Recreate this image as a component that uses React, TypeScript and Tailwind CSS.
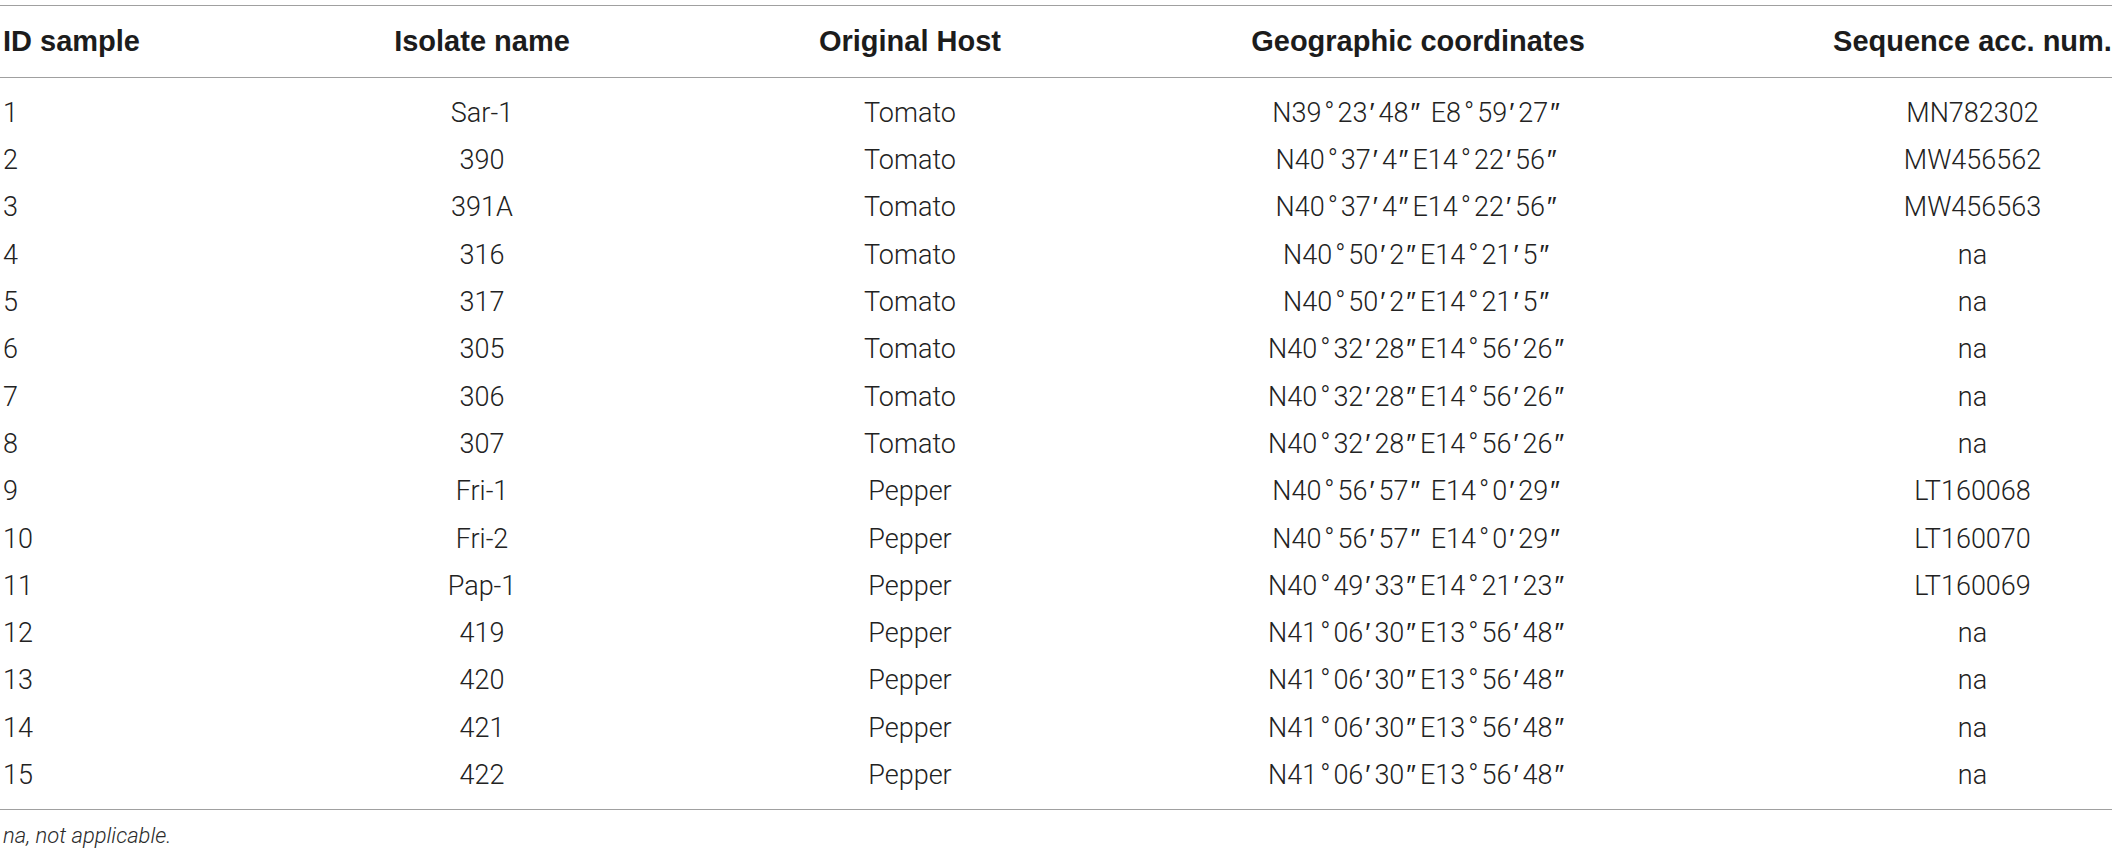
import React from "react";

const rows: [string, string, string, string, string][] = [
  ["1", "Sar-1", "Tomato", "N39°23′48″ E8°59′27″", "MN782302"],
  ["2", "390", "Tomato", "N40°37′4″E14°22′56″", "MW456562"],
  ["3", "391A", "Tomato", "N40°37′4″E14°22′56″", "MW456563"],
  ["4", "316", "Tomato", "N40°50′2″E14°21′5″", "na"],
  ["5", "317", "Tomato", "N40°50′2″E14°21′5″", "na"],
  ["6", "305", "Tomato", "N40°32′28″E14°56′26″", "na"],
  ["7", "306", "Tomato", "N40°32′28″E14°56′26″", "na"],
  ["8", "307", "Tomato", "N40°32′28″E14°56′26″", "na"],
  ["9", "Fri-1", "Pepper", "N40°56′57″ E14°0′29″", "LT160068"],
  ["10", "Fri-2", "Pepper", "N40°56′57″ E14°0′29″", "LT160070"],
  ["11", "Pap-1", "Pepper", "N40°49′33″E14°21′23″", "LT160069"],
  ["12", "419", "Pepper", "N41°06′30″E13°56′48″", "na"],
  ["13", "420", "Pepper", "N41°06′30″E13°56′48″", "na"],
  ["14", "421", "Pepper", "N41°06′30″E13°56′48″", "na"],
  ["15", "422", "Pepper", "N41°06′30″E13°56′48″", "na"],
];

function Coord({ text }: { text: string }) {
  const parts = text.split(/([°′″])/);
  return (
    <>
      {parts.map((p, i) => {
        if (p === "°")
          return (
            <span key={i} className="mx-[3px]">
              °
            </span>
          );
        if (p === "′" || p === "″")
          return (
            <span
              key={i}
              className="ml-[2px] mr-[4px]"
              style={{ fontFamily: '"Liberation Sans", sans-serif' }}
            >
              {p}
            </span>
          );
        return <React.Fragment key={i}>{p}</React.Fragment>;
      })}
    </>
  );
}

export default function App() {
  return (
    <div
      className="w-[2118px] h-[859px] bg-white pt-[5px] pr-[6px] text-[#222]"
      style={{ fontFamily: '"Liberation Sans", Arial, sans-serif' }}
    >
      <table className="w-[2112px] table-fixed border-collapse">
        <colgroup>
          <col className="w-[147px]" />
          <col className="w-[670px]" />
          <col className="w-[186px]" />
          <col className="w-[830px]" />
          <col className="w-[279px]" />
        </colgroup>
        <thead>
          <tr className="h-[72px] border-t border-b border-[#a0a0a0] text-[29px] font-bold text-[#1c1c1c]">
            <th className="text-left pl-[3px] font-bold whitespace-nowrap">ID sample</th>
            <th className="text-center font-bold whitespace-nowrap">Isolate name</th>
            <th className="text-center font-bold whitespace-nowrap">Original Host</th>
            <th className="text-center font-bold whitespace-nowrap">Geographic coordinates</th>
            <th className="text-center font-bold whitespace-nowrap">Sequence acc. num.</th>
          </tr>
        </thead>
        <tbody
          className="text-[27px] font-light text-[#222]"
          style={{ fontFamily: 'Roboto, "Liberation Sans", sans-serif' }}
        >
          <tr className="h-[12px]">
            <td colSpan={5}></td>
          </tr>
          {rows.map((r) => (
            <tr key={r[0]} className="h-[47.3px]">
              <td className="text-left pl-[3px]">{r[0]}</td>
              <td className="text-center">{r[1]}</td>
              <td className="text-center">{r[2]}</td>
              <td className="text-center whitespace-nowrap">
                <Coord text={r[3]} />
              </td>
              <td className="text-center">{r[4]}</td>
            </tr>
          ))}
          <tr className="h-[11px] border-b border-[#a0a0a0]">
            <td colSpan={5}></td>
          </tr>
        </tbody>
      </table>
      <div
        className="pl-[3px] pt-[9px] text-[22px] font-light italic text-[#2a2a2a]"
        style={{ fontFamily: 'Roboto, "Liberation Sans", sans-serif' }}
      >
        na, not applicable.
      </div>
    </div>
  );
}
